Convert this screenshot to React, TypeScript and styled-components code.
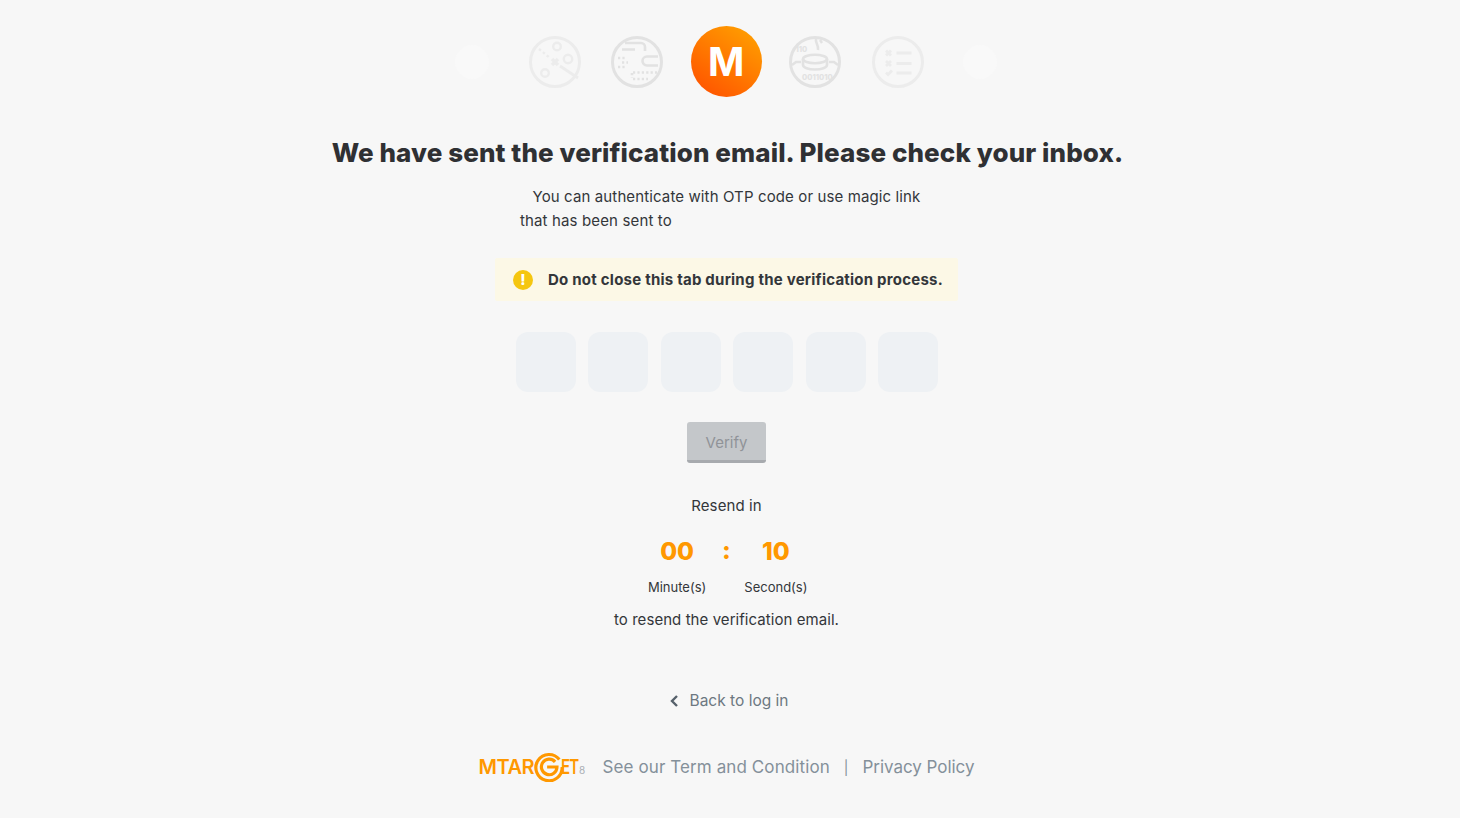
import React from 'react';
import styled, { createGlobalStyle } from 'styled-components';

const TEXT_COLOR = '#33363a';
const MUTED_COLOR = '#84909a';
const ORANGE = '#ff9800';
const ICON_COLOR = '#e2e2e2';
const FONT = '"Inter", "Open Sans", "Liberation Sans", sans-serif';

const GlobalStyle = createGlobalStyle`
  html, body {
    margin: 0;
    padding: 0;
    background: #f7f7f7;
  }
  body {
    font-family: ${FONT};
    color: ${TEXT_COLOR};
  }
`;

const ScatterIcon = () => (
  <StepSvg viewBox="0 0 52 52" $faint>
    <circle cx="26" cy="26" r="24.500" strokeWidth="3" />
    <circle cx="28" cy="10.500" r="3.800" strokeWidth="2.400" />
    <circle cx="39" cy="23" r="4.200" strokeWidth="2.400" />
    <circle cx="16" cy="37" r="3.800" strokeWidth="2.400" />
    <path d="M10 13l11 9" strokeWidth="2.400" strokeDasharray="2.500 2.500" />
    <path d="M31 30l18 12" strokeWidth="3" />
    <path d="M23 23l6 6M29 23l-6 6" strokeWidth="3.600" />
  </StepSvg>
);

const CircuitIcon = () => (
  <StepSvg viewBox="0 0 52 52">
    <circle cx="26" cy="26" r="24.500" strokeWidth="3" />
    <path d="M34 15v-4a4 4 0 0 0-4-4H14" strokeWidth="2.600" />
    <path d="M11 13.500h13" strokeWidth="2.600" />
    <path d="M47 20.500H36a4.300 4.300 0 0 0 0 9h11" strokeWidth="2.600" />
    <path d="M7 22h8M11 26.500h6M7 31h8" strokeWidth="2.600" strokeDasharray="2.200 2.200" />
    <path d="M22 36.500h24M22 43h15M21 37v5" strokeWidth="2.600" strokeDasharray="2.200 2.200" />
  </StepSvg>
);

const DataIcon = () => (
  <StepSvg viewBox="0 0 52 52">
    <circle cx="26" cy="26" r="24.500" strokeWidth="3" />
    <path d="M27 3c-1 4 3 6 2 11" strokeWidth="2.600" />
    <path d="M31 4l2 3" strokeWidth="2.400" />
    <ellipse cx="26" cy="23" rx="12" ry="4.200" strokeWidth="2.600" />
    <path d="M14 23v6c0 2.500 5.500 4.500 12 4.500s12-2 12-4.500v-6" strokeWidth="2.600" />
    <path d="M3 29l4-3h5M49 29l-4-3h-5" strokeWidth="2.400" />
    <IconText x="6.500" y="15.500">110</IconText>
    <IconText x="13" y="43.500">0011010</IconText>
  </StepSvg>
);

const ChecklistIcon = () => (
  <StepSvg viewBox="0 0 52 52" $faint>
    <circle cx="26" cy="26" r="24.500" strokeWidth="3" />
    <path d="M14 14.500l5 5M19 14.500l-5 5M14 25l5 5M19 25l-5 5M14 36.500l2 2 4-4" strokeWidth="2.800" />
    <path d="M24.500 17h15M24.500 27.500h15M24.500 37h15" strokeWidth="2.800" />
  </StepSvg>
);

const LogoMark = () => (
  <RingSvg viewBox="0 0 32 32">
    <path d="M27 8A14 14 0 1 0 30 16" strokeWidth="3.400" />
    <path d="M22.500 10.500A8.300 8.300 0 1 0 24.500 16H14" strokeWidth="3.400" />
  </RingSvg>
);

const App = () => {
  return (
    <Page>
      <GlobalStyle />
      <Steps>
        <Step><Dot /></Step>
        <Step><ScatterIcon /></Step>
        <Step><CircuitIcon /></Step>
        <Step $active><ActiveBadge>M</ActiveBadge></Step>
        <Step><DataIcon /></Step>
        <Step><ChecklistIcon /></Step>
        <Step><Dot /></Step>
      </Steps>

      <Title>We have sent the verification email. Please check your inbox.</Title>

      <Intro>You can authenticate with OTP code or use magic link</Intro>
      <SentTo>that has been sent to</SentTo>

      <Warning>
        <WarningIcon>!</WarningIcon>
        <WarningText>Do not close this tab during the verification process.</WarningText>
      </Warning>

      <OtpRow>
        {[0, 1, 2, 3, 4, 5].map((i) => (
          <OtpInput key={i} disabled />
        ))}
      </OtpRow>

      <VerifyButton disabled>Verify</VerifyButton>

      <ResendLabel>Resend in</ResendLabel>
      <Timer>
        <TimeUnit>
          <TimeValue>00</TimeValue>
          <TimeLabel>Minute(s)</TimeLabel>
        </TimeUnit>
        <Colon>:</Colon>
        <TimeUnit>
          <TimeValue>10</TimeValue>
          <TimeLabel>Second(s)</TimeLabel>
        </TimeUnit>
      </Timer>
      <ResendNote>to resend the verification email.</ResendNote>

      <BackLink href="#">
        <svg width="10" height="14" viewBox="0 0 10 14" fill="none" stroke="#56616b" strokeWidth="2.400">
          <path d="M9 2L4 7l5 5" />
        </svg>
        Back to log in
      </BackLink>

      <Footer>
        <Logo>
          <LogoText>MTAR</LogoText>
          <LogoMark />
          <LogoEnd>ET</LogoEnd>
          <LogoSuffix>8</LogoSuffix>
        </Logo>
        <FooterLink href="#">See our Term and Condition</FooterLink>
        <Divider>|</Divider>
        <PrivacyLink href="#">Privacy Policy</PrivacyLink>
      </Footer>
    </Page>
  );
};

const Page = styled.div`
  box-sizing: border-box;
  width: 100%;
  height: 818px;
  padding: 26px 7px 0 0;
  overflow: hidden;
  display: flex;
  flex-direction: column;
  align-items: center;
`;

const Steps = styled.div`
  display: flex;
  align-items: center;
  height: 71px;
  margin-left: -0.500px;
`;

const Step = styled.div<{ $active?: boolean }>`
  width: ${(p) => (p.$active ? '95.5px' : '82.5px')};
  display: flex;
  justify-content: center;
`;

const Dot = styled.div`
  width: 34px;
  height: 34px;
  border-radius: 50%;
  background: #f9f9f9;
`;

const StepSvg = styled.svg<{ $faint?: boolean }>`
  width: 52px;
  height: 52px;
  fill: none;
  stroke: ${(p) => (p.$faint ? '#ececec' : ICON_COLOR)};
`;

const IconText = styled.text`
  font-family: ${FONT};
  font-size: 7.500px;
  font-weight: 800;
  fill: ${ICON_COLOR};
  stroke: none;
`;

const ActiveBadge = styled.div`
  width: 71px;
  height: 71px;
  border-radius: 50%;
  background: linear-gradient(215deg, #ff9d00 10%, #ff5500 90%);
  color: #fff;
  font-size: 39px;
  font-weight: 700;
  line-height: 71px;
  text-align: center;
`;

const Title = styled.h1`
  margin: 39px 0 0 2px;
  font-size: 26px;
  line-height: 34px;
  font-weight: 800;
  color: #2f3033;
  letter-spacing: 0.1px;
  white-space: nowrap;
`;

const Intro = styled.p`
  margin: 15px 0 0;
  font-size: 15px;
  line-height: 24px;
  letter-spacing: 0.12px;
  color: ${TEXT_COLOR};
`;

const SentTo = styled.p`
  margin: 0;
  width: 413px;
  font-size: 15px;
  line-height: 24px;
  letter-spacing: 0.14px;
  color: ${TEXT_COLOR};
`;

const Warning = styled.div`
  margin-top: 25px;
  width: 463px;
  height: 43px;
  box-sizing: border-box;
  padding-left: 18px;
  display: flex;
  align-items: center;
  gap: 15px;
  background: #fcf8e6;
  border-radius: 2px;
`;

const WarningIcon = styled.span`
  width: 20px;
  height: 20px;
  flex: none;
  border-radius: 50%;
  background: #f5c60f;
  color: #fff;
  font-size: 15px;
  font-weight: 800;
  line-height: 20px;
  text-align: center;
`;

const WarningText = styled.span`
  font-size: 15px;
  font-weight: 700;
  letter-spacing: 0.23px;
  color: #33363a;
  white-space: nowrap;
`;

const OtpRow = styled.div`
  margin: 31px 0 0 1px;
  display: flex;
  gap: 12.400px;
`;

const OtpInput = styled.input`
  box-sizing: border-box;
  width: 60px;
  height: 60px;
  padding: 0;
  border: 0;
  border-radius: 12px;
  background: #eef1f4;
`;

const VerifyButton = styled.button`
  margin-top: 30px;
  width: 79px;
  height: 41px;
  padding: 2px 0 0;
  border: 0;
  border-bottom: 3px solid #a7aaae;
  border-radius: 3px;
  background: #c4c7ca;
  color: #909398;
  font-family: ${FONT};
  font-size: 15px;
`;

const ResendLabel = styled.div`
  margin-top: 33px;
  font-size: 15px;
  line-height: 20px;
  letter-spacing: 0.1px;
`;

const Timer = styled.div`
  margin-top: 19px;
  display: flex;
  align-items: flex-start;
  gap: 5px;
`;

const TimeUnit = styled.div`
  width: 80px;
  display: flex;
  flex-direction: column;
  align-items: center;
`;

const TimeValue = styled.div`
  font-size: 24.500px;
  line-height: 32px;
  font-weight: 800;
  color: ${ORANGE};
`;

const TimeLabel = styled.div`
  margin-top: 12px;
  font-size: 13px;
  line-height: 16px;
  white-space: nowrap;
`;

const Colon = styled.div`
  font-size: 25px;
  line-height: 30px;
  font-weight: 800;
  color: ${ORANGE};
`;

const ResendNote = styled.div`
  margin-top: 15px;
  font-size: 15px;
  line-height: 20px;
  letter-spacing: 0.06px;
`;

const BackLink = styled.a`
  margin-top: 61px;
  margin-left: 3px;
  display: flex;
  align-items: center;
  gap: 12px;
  font-size: 15.500px;
  line-height: 20px;
  color: #6d7881;
  text-decoration: none;
`;

const Footer = styled.div`
  margin-top: 39px;
  display: flex;
  align-items: center;
  height: 34px;
`;

const Logo = styled.div`
  display: flex;
  align-items: center;
  width: 105px;
  margin-right: 19px;
  color: ${ORANGE};
`;

const LogoText = styled.span`
  font-size: 20px;
  font-weight: 600;
  letter-spacing: -0.5px;
  line-height: 30px;
`;

const LogoEnd = styled(LogoText)`
  flex: none;
  width: 18px;
  margin-left: -3px;
  letter-spacing: -1px;
  transform: scaleX(0.75);
  transform-origin: left center;
`;

const RingSvg = styled.svg`
  width: 30px;
  height: 30px;
  flex: none;
  fill: none;
  stroke: ${ORANGE};
`;

const LogoSuffix = styled.span`
  align-self: flex-end;
  font-size: 10px;
  line-height: 24px;
  color: #a9aeb3;
`;

const FooterLink = styled.a`
  font-size: 17px;
  line-height: 24px;
  letter-spacing: 0.1px;
  color: ${MUTED_COLOR};
  text-decoration: none;
  white-space: nowrap;
`;

const PrivacyLink = styled(FooterLink)`
  letter-spacing: -0.04px;
`;

const Divider = styled.span`
  margin: 0 14px;
  font-size: 14px;
  color: ${MUTED_COLOR};
`;

export default App;
